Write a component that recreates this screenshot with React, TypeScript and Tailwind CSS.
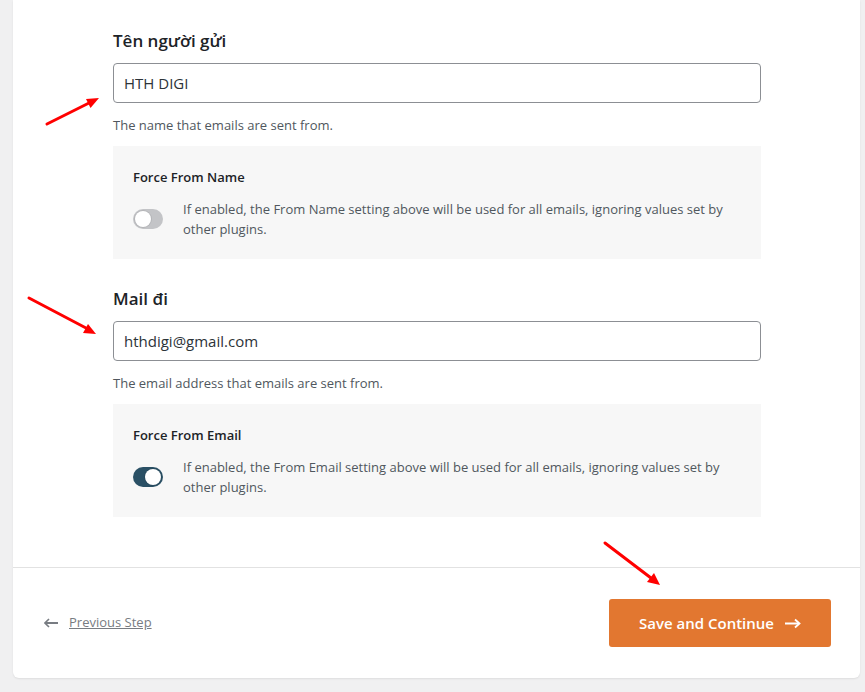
import React from 'react'

const font = { fontFamily: '"Open Sans", "Noto Sans", Arial, sans-serif' }

function Toggle({ on }: { on: boolean }) {
  return (
    <span
      className={`relative inline-flex h-[20px] w-[30px] shrink-0 items-center rounded-full ${
        on ? 'bg-[#2a5065] justify-end' : 'bg-[#c3c4c7] justify-start'
      } px-[2px]`}
    >
      <span className="block h-[16px] w-[16px] rounded-full bg-white shadow-[0_0_0_1px_rgba(0,0,0,0.08)]" />
    </span>
  )
}

function Field({
  label,
  value,
  help,
  forceTitle,
  forceText,
  on,
}: {
  label: string
  value: string
  help: string
  forceTitle: string
  forceText: React.ReactNode
  on: boolean
}) {
  return (
    <div>
      <h3 className="text-[17px] leading-[24px] font-semibold text-[#1d2327]">{label}</h3>
      <input
        readOnly
        value={value}
        className="mt-[10px] block h-[40px] w-full rounded-[4px] border border-[#8c8f94] px-[10px] text-[15px] text-[#2c3338] outline-none"
      />
      <p className="mt-[12px] text-[13px] leading-[20px] text-[#50575e]">{help}</p>
      <div className="mt-[11px] h-[113px] bg-[#f7f7f7] px-[20px] pt-[21px]">
        <div className="text-[13px] leading-[20px] font-semibold text-[#1d2327]">{forceTitle}</div>
        <div className="mt-[12px] flex items-center gap-[20px]">
          <Toggle on={on} />
          <p className="text-[13px] leading-[20px] text-[#50575e]">{forceText}</p>
        </div>
      </div>
    </div>
  )
}

export default function App() {
  return (
    <div className="relative h-[692px] w-[865px] overflow-hidden bg-[#f0f0f1]" style={font}>
      <div className="ml-[13px] w-[847px] rounded-b-[6px] bg-white shadow-[0_1px_2px_rgba(0,0,0,0.08)]">
        <div className="flex flex-col gap-[28px] pl-[100px] pr-[99px] pt-[29px] pb-[50px]">
          <Field
            label="Tên người gửi"
            value="HTH DIGI"
            help="The name that emails are sent from."
            forceTitle="Force From Name"
            forceText={
              <>
                If enabled, the From Name setting above will be used for all emails, ignoring values set by
                <br />
                other plugins.
              </>
            }
            on={false}
          />
          <Field
            label="Mail đi"
            value="hthdigi@gmail.com"
            help="The email address that emails are sent from."
            forceTitle="Force From Email"
            forceText={
              <>
                If enabled, the From Email setting above will be used for all emails, ignoring values set by
                <br />
                other plugins.
              </>
            }
            on={true}
          />
        </div>
        <div className="flex h-[111px] items-center justify-between border-t border-[#e2e2e2] pl-[31px] pr-[29px]">
          <a className="flex items-center gap-[11px] text-[13px] text-[#787c82]">
            <svg width="14" height="10" viewBox="0 0 14 10" className="shrink-0">
              <path d="M5 1 L1 5 L5 9" fill="none" stroke="#787c82" strokeWidth="1.6" />
              <path d="M1.5 5 H14" stroke="#787c82" strokeWidth="2" />
            </svg>
            <span className="underline">Previous Step</span>
          </a>
          <button className="flex h-[48px] w-[222px] items-center justify-center gap-[11px] rounded-[3px] bg-[#e27730] text-[15px] font-semibold text-white">
            Save and Continue
            <svg width="16" height="11" viewBox="0 0 16 11" className="shrink-0">
              <path d="M0 5.5 H14" stroke="#fff" strokeWidth="2" />
              <path d="M10 1.5 L14.5 5.5 L10 9.5" fill="none" stroke="#fff" strokeWidth="1.8" />
            </svg>
          </button>
        </div>
      </div>

      <svg className="pointer-events-none absolute left-0 top-0" width="865" height="692">
        <g stroke="#f00" strokeWidth="3" strokeLinecap="round" fill="#f00">
          <line x1="47" y1="124" x2="89" y2="103" />
          <polygon points="99,98 90.5,108 86,99" stroke="none" />
          <line x1="29" y1="298" x2="86" y2="328" />
          <polygon points="96,334 83,333 88,324" stroke="none" />
          <line x1="605" y1="543" x2="651" y2="578" />
          <polygon points="660,585 647,582 654,573" stroke="none" />
        </g>
      </svg>
    </div>
  )
}
